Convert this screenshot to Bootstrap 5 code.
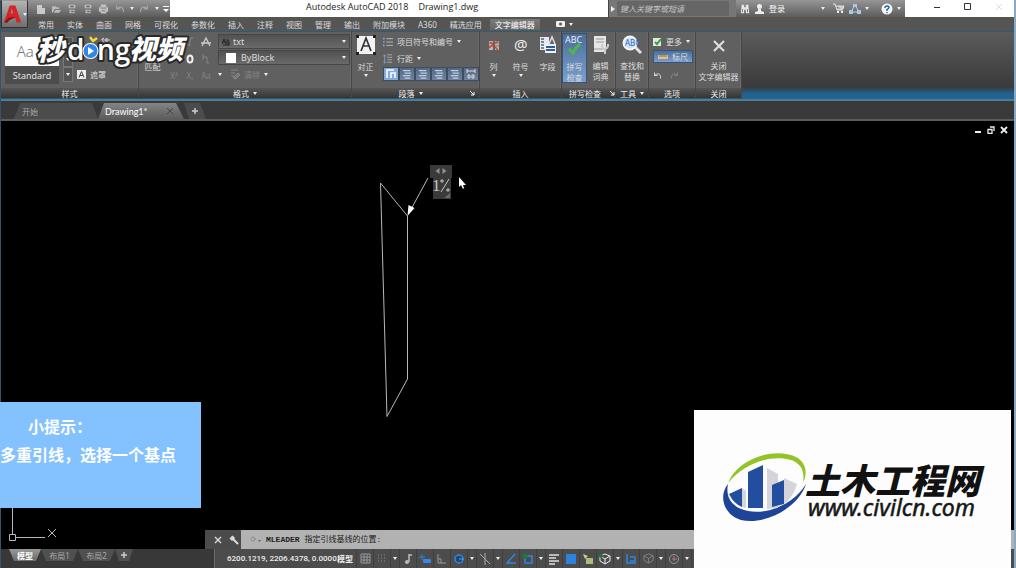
<!DOCTYPE html>
<html lang="zh-CN">
<head>
<meta charset="utf-8">
<meta name="viewport" content="width=device-width, initial-scale=1">
<title>Autodesk AutoCAD 2018 - Drawing1.dwg</title>
<link href="https://cdn.jsdelivr.net/npm/bootstrap@5.3.0/dist/css/bootstrap.min.css" rel="stylesheet">
<style>
body{font-family:"Noto Sans","Noto Sans CJK SC",sans-serif;font-size:8px;line-height:11px;color:#dcdcdc;background:#000}
button,select,input{font:inherit;color:inherit;background:none;border:0;padding:0;margin:0;border-radius:0}
button{display:flex;align-items:center;justify-content:center}
svg{display:block;flex:none}
a{color:inherit;text-decoration:none}
.cad{border-left:1px solid #35546a;border-right:2px solid #86a9c4}
.metal{background:linear-gradient(#969696,#5c5c5c)}
.title-row{height:17px;background:#fff}
.app-btn{width:27px;height:28px;background:linear-gradient(#b4b4b4,#6e6e6e);border:1px solid #333;border-top-color:#999}
.topbar{background:#555654}
.quick{width:142px;padding-left:5px}
.quick button{width:16px;height:16px}
.quick button.thin{width:9px}
.quick .dim{color:#aaa}
.doc-title{font-family:"Open Sans",sans-serif;font-size:9px;line-height:13px;color:#222;gap:10px;padding-left:136px}
.search{width:128px;background:#777;border-left:1px solid #444}
.search input{width:112px;height:15px;font-style:italic;background:#666;padding-left:3px;color:#ccc}
.search input::placeholder{color:#c4c4c4;opacity:1}
.account{width:169px}
.winbtn{width:31px;height:13px;color:#333}
.menu-tabs{height:14px;gap:13px;padding-left:10px}
.menu-tabs a.active{background:linear-gradient(#7a7a7a,#656565);margin:0 -5px;padding:0 5px;color:#fff}
.ribbon{height:70px;border-top:1px solid #2d5d76;border-bottom:2px solid #557a92;background:linear-gradient(#5b5b5b,#404040)}
.panel{background:#606060;border-right:1px solid #464646;box-shadow:inset -1px 0 #696969;padding-top:1px}
.panel-body{height:55px}
.panel-foot{height:11px;background:linear-gradient(#565656,#353535);color:#eee;border-bottom:1px solid #245975}
.w-style{width:138px}.w-format{width:213px}.w-para{width:128px}.w-insert{width:82px}.w-spell{width:54px}.w-tool{width:33px}.w-opt{width:47px}.w-close{width:46px}
.glow{background:linear-gradient(#5b5b5b,#3a3a3a 82%,#1f6594 93%,#1f6594)}
.line17{height:17px;gap:4px}
.caret{width:0;height:0;border:2px solid transparent;border-top:3px solid #eee;border-bottom:0;flex:none}
.big{flex-direction:column;justify-content:flex-start;width:27px;height:50px;padding-top:2px}
.big svg{margin-bottom:6px}
.big .caret{margin-top:2px}
.tight svg{margin-bottom:5px}
.on{background:linear-gradient(#4c6d96,#7ba0cf);border:1px solid #35557d}
.w25{width:25px}
.cell{width:16px;height:17px}
.dim{color:#858585}
.combo{width:132px;height:15px;margin:1px 0;background:linear-gradient(#515151,#6a6a6a);border:1px solid #474747;position:relative;padding:0 3px}
.combo select{appearance:none;flex:1;height:13px;padding-left:2px;font-size:9px;line-height:13px;outline:0}
.swatch{width:10px;height:10px;background:#fff;margin:0 3px}
.preview{width:54px;height:29px;background:#fff;color:#777;font-family:"Noto Sans",sans-serif;font-weight:300;font-size:15px}
.stylename{width:54px;height:18px;background:#4d4d4d;font-family:"Open Sans",sans-serif;font-size:9px;color:#eee}
.scroller{width:10px;height:47px}
.scroller button{height:15px;border:1px solid #777;background:#555}
.align{height:15px}
.align button{width:16px;height:14px;border:1px solid #3d4d60;background:linear-gradient(#566882,#6f829d)}
.align button.on{background:#86aada}
.filetabs{height:20px;background:#3a3a3a;border-bottom:2px solid #5c5c5c;padding-left:13px}
.ftab{height:16px;width:84px;background:#4c4c4c;color:#aaa;padding:0 8px;clip-path:polygon(0 100%,6px 0,78px 0,100% 100%)}
.ftab.active{background:linear-gradient(#848484,#5c5c5c);color:#fff;font-family:Lato,sans-serif;font-size:9px;padding:0 10px 0 7px;width:86px;justify-content:space-between}
.ftab.plus{width:22px;padding:0 7px;clip-path:polygon(0 0,16px 0,100% 100%,5px 100%)}
.drawing{background:#000;overflow:hidden}
.drawing>svg{position:absolute;left:0;top:0}
.docbtns{position:absolute;right:5px;top:4px;gap:3px}
.docbtns button{width:10px;height:10px}
.cmd{position:absolute;left:204px;right:0;bottom:0;height:19px;background:#b2b2b2;color:#222;font-family:"Liberation Mono","Noto Sans CJK SC",monospace}
.cmd .grip{width:36px;background:#4b4b4b;color:#eee;gap:7px;padding-left:5px}
.cmd input{color:#222;width:230px;outline:0}
.bottom{height:19px;background:#383838}
.sheets{width:213px;padding-left:8px}
.sheets button{height:12px;width:37px;background:#505050;color:#aaa;clip-path:polygon(0 0,100% 0,32px 100%,5px 100%)}
.sheets button.active{background:linear-gradient(#999,#6a6a6a);color:#fff;font-weight:700;width:32px;clip-path:polygon(0 0,100% 0,27px 100%,5px 100%)}
.sheets button.plus{width:18px;clip-path:polygon(0 0,100% 0,14px 100%,4px 100%)}
.status{background:#4c4c4c;border-left:1px solid #6a6a6a;color:#eee}
.coords{width:119px;padding-left:12px;font-family:Roboto,sans-serif;font-weight:500;white-space:nowrap}
.status button{width:17px;height:19px;border-right:1px solid #3f3f3f}
.status button.model{width:23px;font-weight:600}
.status button.drop{width:9px}
.tip{position:absolute;left:0;bottom:60px;width:201px;height:106px;background:#84c1ff;color:#fff;font-family:"Noto Sans CJK SC",sans-serif;font-size:16px;font-weight:700;line-height:28px;padding-top:10px}
.tip p{margin:0;white-space:nowrap}
.tip p:first-child{padding-left:28px}
.brand{position:absolute;right:5px;bottom:0;width:317px;height:158px;background:#fdfdfd}
.mark-video{position:absolute;left:30px;top:26px}
</style>
</head>
<body>
<svg width="0" height="0" class="position-absolute">
<symbol id="new" viewBox="0 0 12 12"><path d="M2 2h5v3h3v6H2z" fill="#c9c9c9"/></symbol>
<symbol id="open" viewBox="0 0 12 12"><path d="M1 3h4l1 1h3v2H4l-2 4H1zM5 7h6l-2 3H3z" fill="#bbb"/></symbol>
<symbol id="save" viewBox="0 0 12 12"><path d="M2 1h8v4H2zM3 7h6v4H3z" fill="#bbb"/><path d="M4 2h4v2H4zM5 8h3v2H5z" fill="#666"/></symbol>
<symbol id="print" viewBox="0 0 12 12"><path d="M3 1h6v3h2v5H9v2H3V9H1V4h2z" fill="#c2c2c2"/><path d="M3 5h6M4 8h4" stroke="#777"/></symbol>
<symbol id="undo" viewBox="0 0 12 12"><path d="M2 2v4h4M2 6q6-5 8 1v3" fill="none" stroke="currentColor" stroke-width="1.3"/></symbol>
<symbol id="redo" viewBox="0 0 12 12"><path d="M10 2v4H6M10 6Q4 1 2 7v3" fill="none" stroke="currentColor" stroke-width="1.3"/></symbol>
<symbol id="x" viewBox="0 0 12 12"><path d="M1 1l10 10M11 1L1 11" fill="none" stroke="currentColor" stroke-width="2.2"/></symbol>
<symbol id="list" viewBox="0 0 12 12"><path d="M4 2h8M4 6h8M4 10h8" stroke="#c5c5c5"/><path d="M0 2h2M0 6h2M0 10h2" stroke="#76a9df" stroke-width="2"/></symbol>
<symbol id="spacing" viewBox="0 0 12 12"><path d="M5 1h6M5 4h6M5 7h6M5 10h6" stroke="#b5b5b5"/><path d="M2 1v10M0 3l2-2 2 2M0 9l2 2 2-2" fill="none" stroke="#76a9df"/></symbol>
<symbol id="lines" viewBox="0 0 12 12"><path d="M1 2h9M3 5h8M1 8h9M3 11h7" stroke="#bacfe9" stroke-width="1.5"/></symbol>
<symbol id="cube" viewBox="0 0 12 12"><path d="M6 1l5 2v5l-5 3-5-3V3zM1 3l5 3 5-3M6 6v5" fill="none" stroke="currentColor"/></symbol>
</svg>

<div class="cad d-flex flex-column vh-100 position-relative overflow-hidden">
<header class="topbar d-flex">
  <button class="app-btn flex-shrink-0" aria-label="应用程序菜单"><svg width="20" height="22" viewBox="0 0 21 22"><path d="M1 20L7 2h6l6 18h-5l-1-5-7 2-1 3z" fill="#d72228"/><path d="M8 11l3-1-2-5z" fill="#8d8989"/><path d="M1 20l5-5 7-1-7 4-1 2z" fill="#8d1118"/></svg><i class="caret"></i></button>
  <div class="flex-fill">
    <div class="title-row d-flex">
      <div class="quick metal d-flex align-items-center text-light">
        <button aria-label="新建"><svg width="12" height="12"><use href="#new"/></svg></button><button aria-label="打开"><svg width="11" height="12"><use href="#open"/></svg></button><button aria-label="保存"><svg width="10" height="12"><use href="#save"/></svg></button><button aria-label="另存为"><svg width="10" height="12"><use href="#save"/></svg></button><button aria-label="打印"><svg width="11" height="12"><use href="#print"/></svg></button><button class="dim" aria-label="放弃"><svg width="10" height="10"><use href="#undo"/></svg></button><button class="thin" aria-label="放弃列表"><i class="caret"></i></button><button class="dim" aria-label="重做"><svg width="10" height="10"><use href="#redo"/></svg></button><button class="thin" aria-label="重做列表"><i class="caret"></i></button><button class="thin" aria-label="自定义"><svg width="8" height="8" viewBox="0 0 8 8"><path d="M1 1h6v1H1zM1 4h6L4 7z" fill="#fff"/></svg></button>
      </div>
      <div class="doc-title d-flex flex-fill text-nowrap"><span>Autodesk AutoCAD 2018</span><span>Drawing1.dwg</span></div>
      <div class="search d-flex align-items-center"><svg width="8" height="8" viewBox="0 0 8 8"><path d="M2 1l4 3-4 3z" fill="#eee"/></svg><input type="text" aria-label="搜索" placeholder="键入关键字或短语"></div>
      <div class="account metal d-flex align-items-center text-light">
        <button class="me-1 ps-1" aria-label="查找"><svg width="10" height="12" viewBox="0 0 12 12"><path d="M2 1h3v3h2V1h3l1 10H7V7H5v4H1z" fill="#e7e7e7"/><path d="M3 6v4M9 6v4" stroke="#777"/></svg></button>
        <button class="gap-1 me-auto"><svg width="11" height="12" viewBox="0 0 11 12"><circle cx="5.500" cy="3.500" r="2.500" fill="#eee"/><path d="M4 6h3v2l3 1v2H1V9l3-1z" fill="#eee"/></svg>登录</button>
        <button class="me-1" aria-label="登录菜单"><i class="caret"></i></button>
        <button class="mx-1" aria-label="商店"><svg width="12" height="11" viewBox="0 0 12 11"><path d="M0 1h2l2 6h6M3 3h8l-1 3H4" fill="#ccc" stroke="#ddd"/><path d="M4 9h2M8 9h2" stroke="#eee" stroke-width="2"/></svg></button>
        <button class="me-2 pe-1" aria-label="保持连接"><svg width="12" height="12" viewBox="0 0 12 12"><path d="M6 2l4 7H2z" fill="none" stroke="#bcd1ec"/><path d="M4 1h4v3H4zM0 7h4v4H0zM8 7h4v4H8z" fill="#aac5ea"/></svg><i class="caret ms-1"></i></button>
        <button class="me-1" aria-label="帮助"><svg width="12" height="12" viewBox="0 0 12 12"><circle cx="6" cy="6" r="5.500" fill="#f5f7fb"/><path d="M4 5q0-2 2-2t2 1.500q0 1-2 2V8M6 9v1.300" fill="none" stroke="#265fae" stroke-width="1.400"/></svg><i class="caret ms-1"></i></button>
      </div>
      <button class="winbtn ms-3" aria-label="最小化"><svg width="8" height="8"><path d="M1 4.500h6" stroke="#333"/></svg></button>
      <button class="winbtn" aria-label="最大化"><svg width="8" height="8"><path d="M.5.500h6v6h-6z" fill="none" stroke="#333"/></svg></button>
      <button class="winbtn" aria-label="关闭"><svg width="8" height="8"><path d="M1 1l6 6M7 1L1 7" stroke="#ddd"/></svg></button>
    </div>
    <nav class="menu-tabs d-flex align-items-center text-nowrap"><a href="#">常用</a><a href="#">实体</a><a href="#">曲面</a><a href="#">网格</a><a href="#">可视化</a><a href="#">参数化</a><a href="#">插入</a><a href="#">注释</a><a href="#">视图</a><a href="#">管理</a><a href="#">输出</a><a href="#">附加模块</a><a href="#">A360</a><a href="#">精选应用</a><a href="#" class="active">文字编辑器</a><button class="ms-2 gap-1" aria-label="功能区显示"><svg width="9" height="6"><rect width="9" height="6" rx="1" fill="#eee"/><circle cx="4.500" cy="3" r="1.500" fill="#555"/></svg><i class="caret"></i></button></nav>
  </div>
</header>

<main class="ribbon d-flex flex-shrink-0 text-nowrap">
  <section class="panel w-style flex-shrink-0">
    <div class="panel-body d-flex pt-1 ps-1">
      <div class="me-1"><button class="preview">Aa B</button><button class="stylename">Standard</button></div>
      <div class="scroller d-flex flex-column"><button aria-label="上"><i class="caret"></i></button><button aria-label="下"><i class="caret"></i></button><button aria-label="更多样式"><i class="caret"></i></button></div>
      <div class="d-flex flex-column justify-content-between ms-1"><button aria-label="注释性"><svg width="34" height="9" viewBox="0 0 34 9"><path d="M26 1v8M24 3l3-2M29 1v8M27 3h6M27 6h6M30 1v8" stroke="#ccc"/></svg></button><button class="gap-1 align-self-start mb-2"><svg width="9" height="9" viewBox="0 0 9 9"><path d="M0 0h9v9H0z" fill="#eee"/><path d="M2 7.500l2.500-6 2.500 6M3 5.500h3" fill="none" stroke="#444"/></svg>遮罩</button></div>
    </div>
    <div class="panel-foot text-center">样式</div>
  </section>
  <section class="panel w-format flex-shrink-0">
    <div class="panel-body d-flex">
      <button class="big"><svg width="16" height="20"></svg>匹配</button>
      <div>
        <div class="d-flex"><button class="cell" aria-label="粗体"></button><button class="cell dim" aria-label="斜体"><svg width="6" height="9"><path d="M4 1L2 8M2 1h4M0 8h4" stroke="currentColor"/></svg></button><button class="cell" aria-label="删除线"><svg width="10" height="10" viewBox="0 0 10 10"><path d="M1 9l4-8 4 8M0 6h10" fill="none" stroke="#ccc" stroke-width="1.300"/></svg></button></div>
        <div class="d-flex"><button class="cell" aria-label="下划线"></button><button class="cell" aria-label="上划线"><svg width="8" height="10" viewBox="0 0 8 10"><ellipse cx="4" cy="5" rx="2.500" ry="3.500" fill="none" stroke="#eee" stroke-width="2"/></svg></button><button class="cell dim" aria-label="堆叠"><svg width="8" height="10" viewBox="0 0 8 10"><path d="M1 0v6M1 3h4v6h2" fill="none" stroke="currentColor"/></svg></button></div>
        <div class="d-flex dim"><button class="cell">X²</button><button class="cell">X,</button><button class="cell">Aa</button></div>
      </div>
      <div class="ms-1">
        <div class="combo d-flex align-items-center"><svg width="9" height="8" viewBox="0 0 9 8"><path d="M0 6l2-5 2 5M1 4h2M5 1v5h2V3H5M1 7h7" fill="none" stroke="#222"/></svg><select aria-label="字体"><option>txt</option></select><i class="caret"></i></div>
        <div class="combo d-flex align-items-center"><span class="swatch ms-1"></span><select aria-label="颜色"><option>ByBlock</option></select><i class="caret"></i></div>
        <div class="line17 d-flex align-items-center dim"><i class="caret"></i><button class="gap-1 ms-1"><svg width="10" height="11" viewBox="0 0 10 11"><path d="M1 1h7M1 4h4M1 7h3M3 9l5-5 2 2-4 4z" stroke="currentColor" fill="#777"/></svg>清除</button><i class="caret"></i></div>
      </div>
    </div>
    <div class="panel-foot d-flex align-items-center justify-content-center gap-1">格式 <i class="caret"></i></div>
  </section>
  <section class="panel w-para flex-shrink-0">
    <div class="panel-body d-flex">
      <button class="big"><svg width="20" height="20" viewBox="0 0 20 20"><path d="M1 1h18v18H1z" fill="#f2f2f2"/><path d="M5 16l5-13 5 13M7 11h6" fill="none" stroke="#333" stroke-width="1.700"/><path d="M0 0h3v3H0zM17 0h3v3h-3zM0 17h3v3H0zM17 17h3v3h-3z" fill="#222"/></svg>对正<i class="caret"></i></button>
      <div class="ms-1">
        <button class="line17"><svg width="10" height="10"><use href="#list"/></svg>项目符号和编号<i class="caret"></i></button>
        <button class="line17"><svg width="10" height="10"><use href="#spacing"/></svg>行距<i class="caret"></i></button>
        <div class="align d-flex"><button class="on" aria-label="默认"><svg width="10" height="10" viewBox="0 0 10 10"><path d="M1 9V1h7M5 9V4h4v5" fill="none" stroke="#fff" stroke-width="1.500"/></svg></button><button aria-label="左对齐"><svg width="10" height="10"><use href="#lines"/></svg></button><button aria-label="居中"><svg width="10" height="10"><use href="#lines"/></svg></button><button aria-label="右对齐"><svg width="10" height="10"><use href="#lines"/></svg></button><button aria-label="对正"><svg width="10" height="10"><use href="#lines"/></svg></button><button aria-label="分散"><svg width="10" height="10" viewBox="0 0 10 10"><path d="M1 2h8M1 0v4M9 0v4M2 6h2v3H2zM6 6h2v3H6z" fill="none" stroke="#ddd"/></svg></button></div>
      </div>
    </div>
    <div class="panel-foot d-flex align-items-center"><span class="ms-auto me-1">段落</span><i class="caret me-auto"></i><svg class="me-1" width="6" height="6"><path d="M1 1l4 4M5 2v3H2" stroke="#fff" fill="none"/></svg></div>
  </section>
  <section class="panel w-insert flex-shrink-0">
    <div class="panel-body d-flex">
      <button class="big"><svg width="12" height="20" viewBox="0 0 12 20"><path d="M1 6h4v9H1zM7 6h4v9H7z" fill="#c0b5b0"/><path d="M1 8h4M1 11h4M7 8h4M7 11h4" stroke="#777"/><path d="M1 13l9-7M2 7l3 3M7 12l3 3" stroke="#d3432e" stroke-width="1.500"/></svg>列<i class="caret"></i></button>
      <button class="big"><svg width="24" height="20" viewBox="0 0 24 20"><text x="5" y="15" font-family="Noto Sans" font-size="15" fill="#eee">@</text></svg>符号<i class="caret"></i></button>
      <button class="big"><svg width="18" height="20" viewBox="0 0 18 20"><path d="M1 2h9v13H1z" fill="#e4eaf2"/><path d="M2 4h3M2 7h3M2 10h3M2 13h3" stroke="#567" stroke-width="1.500"/><path d="M6 9h11v9H6z" fill="#eef3fb"/><path d="M7 12h9M7 15h9" stroke="#315b9b" stroke-width="2"/><path d="M10 9l3-7 3 7" fill="none" stroke="#ddd" stroke-width="1.500"/></svg>字段</button>
    </div>
    <div class="panel-foot text-center">插入</div>
  </section>
  <section class="panel w-spell flex-shrink-0">
    <div class="panel-body d-flex">
      <button class="big on w25 tight p-0"><svg width="20" height="22" viewBox="0 0 20 22"><text x="0" y="9" font-family="Noto Sans" font-size="9" fill="#e5edff">ABC</text><path d="M4 15l4 4q3-6 7-9" fill="none" stroke="#4db848" stroke-width="3"/></svg>拼写<br>检查</button>
      <button class="big tight"><svg width="18" height="20" viewBox="0 0 18 20"><path d="M2 1h12v16H2z" fill="#e5e5e5"/><path d="M4 4h8M4 7h8M2 14h12" stroke="#999"/><path d="M10 9v2q1 3 3 3t3-3V9M13 13v6" fill="none" stroke="#ccc" stroke-width="2"/></svg>编辑<br>词典</button>
    </div>
    <div class="panel-foot d-flex align-items-center justify-content-end gap-2">拼写检查<svg width="6" height="6"><path d="M1 1l4 4M5 2v3H2" stroke="#fff" fill="none"/></svg></div>
  </section>
  <section class="panel w-tool flex-shrink-0">
    <div class="panel-body d-flex justify-content-center"><button class="big tight"><svg width="20" height="20" viewBox="0 0 20 20"><path d="M13 12l6 6" stroke="#e2e2e2" stroke-width="3"/><circle cx="8" cy="8" r="6.500" fill="#cfe2fb" stroke="#f5f5f5" stroke-width="2"/><text x="3" y="11" font-family="Noto Sans" font-size="8" fill="#2e67b5">ABC</text></svg>查找和<br>替换</button></div>
    <div class="panel-foot d-flex align-items-center justify-content-center gap-1">工具<i class="caret"></i></div>
  </section>
  <section class="panel w-opt flex-shrink-0">
    <div class="panel-body ps-1">
      <button class="line17"><svg width="9" height="9" viewBox="0 0 9 9"><path d="M0 1h8v8H0z" fill="#dcebdc"/><path d="M2 5l2 2 4-5" stroke="#419a35" stroke-width="2" fill="none"/></svg>更多<i class="caret"></i></button>
      <button class="on gap-1 px-1"><svg width="10" height="11" viewBox="0 0 10 11"><path d="M0 4h10v4H0z" fill="#e2c091"/><path d="M2 4v2M4 4v2M6 4v2M8 4v2" stroke="#8d653d"/></svg>标尺</button>
      <div class="line17 d-flex align-items-center mt-1"><button class="me-1" aria-label="放弃"><svg width="9" height="9"><use href="#undo"/></svg></button><button class="dim" aria-label="重做"><svg width="9" height="9"><use href="#redo"/></svg></button></div>
    </div>
    <div class="panel-foot text-center">选项</div>
  </section>
  <section class="panel w-close flex-shrink-0">
    <div class="panel-body d-flex justify-content-center"><button class="big tight"><svg width="18" height="20" viewBox="-3 -5 18 20"><use href="#x" width="12" height="12"/></svg>关闭<br>文字编辑器</button></div>
    <div class="panel-foot text-center">关闭</div>
  </section>
  <div class="glow flex-fill"></div>
</main>

<nav class="filetabs d-flex align-items-end flex-shrink-0"><button class="ftab justify-content-start">开始</button><button class="ftab active">Drawing1*<svg width="8" height="8"><path d="M1 1l6 6M7 1L1 7" stroke="#444"/></svg></button><button class="ftab plus" aria-label="新图形"><svg width="8" height="8"><path d="M4 1v6M1 4h6" stroke="#ccc" stroke-width="1.500"/></svg></button></nav>

<section class="drawing position-relative flex-fill">
  <svg width="600" height="428" viewBox="1 121 600 428" fill="none" stroke="#b8b8b8">
    <path d="M380.500 183L407.500 216V379L387 416.500z"/><path d="M428 178L409 213"/><path d="M407.500 216l1-11 6 3z" fill="#fff" stroke="none"/>
    <path d="M430 165h22v13h-22zM433 178h18v21h-18z" fill="#3a3a3a" stroke="none"/>
    <path d="M439.500 168v6l-4-3zM442.500 168v6l4-3z" fill="#909090" stroke="none"/><path d="M450 193v5h-6z" fill="#666" stroke="none"/>
    <text x="432" y="191" font-family="Liberation Serif" font-size="17" fill="#c4c4c4" stroke="none">1</text><path d="M449 179l-8 13M441 180h2v2h-2zM447 189h2v2h-2z" stroke="#c4c4c4"/>
    <path d="M459 177v10l2-2 2 4 1-1-1-3h3z" fill="#fff" stroke="none"/>
    <path d="M12.500 500v34M15 537.500h30M9.500 534.500h6v6h-6zM48 529l8 8M56 529l-8 8"/>
  </svg>
  <div class="docbtns d-flex"><button aria-label="最小化"><svg width="8" height="8"><path d="M1 6h6" stroke="#eee" stroke-width="2"/></svg></button><button aria-label="还原"><svg width="8" height="8"><path d="M3 1h4v4M1 3.500h4v4H1z" fill="none" stroke="#eee" stroke-width="1.300"/></svg></button><button aria-label="关闭"><svg width="8" height="8"><path d="M1 1l6 6M7 1L1 7" stroke="#eee" stroke-width="1.800"/></svg></button></div>
  <div class="cmd d-flex align-items-center">
    <div class="grip d-flex align-items-center align-self-stretch"><button class="ms-1" aria-label="关闭命令行"><svg width="8" height="8"><path d="M1 1l6 6M7 1L1 7" stroke="#ddd" stroke-width="1.300"/></svg></button><button aria-label="自定义"><svg width="10" height="10" viewBox="0 0 10 10"><path d="M2 2l7 7" stroke="#ddd" stroke-width="2"/><path d="M1 3l2 2 2-2-2-2" fill="none" stroke="#ddd" stroke-width="1.500"/></svg></button></div>
    <svg class="ms-2" width="13" height="8"><circle cx="4" cy="3" r="2" fill="none" stroke="#666" stroke-dasharray="1 1"/><path d="M9 4h3l-1.500 2z" fill="#666"/></svg>
    <label for="cmdline" class="ms-1 text-nowrap"><b>MLEADER</b> 指定引线基线的位置:</label><input id="cmdline" type="text" class="ms-1">
  </div>
</section>

<footer class="bottom d-flex flex-shrink-0">
  <div class="sheets d-flex"><button class="active">模型</button><button>布局1</button><button>布局2</button><button class="plus" aria-label="新布局"><svg width="8" height="8"><path d="M4 1v6M1 4h6" stroke="#ccc" stroke-width="1.500"/></svg></button></div>
  <div class="status d-flex align-items-center flex-fill">
    <span class="coords">6200.1219, 2206.4378, 0.0000</span><button class="model">模型</button>
    <button aria-label="栅格"><svg width="11" height="11"><path d="M1 1h9v9H1zM4 1v9M7 1v9M1 4h9M1 7h9" fill="none" stroke="#999"/></svg></button>
    <button aria-label="捕捉"><svg width="11" height="11"><path d="M1 2h9M1 5h9M1 8h9" stroke="#888" stroke-dasharray="1 2"/></svg></button><button class="drop" aria-label="捕捉设置"><i class="caret"></i></button>
    <button aria-label="推断约束"><svg width="10" height="12"><path d="M6 1v8M6 2h3" stroke="#bbb" stroke-width="1.500"/><circle cx="4" cy="9" r="2" fill="#bbb"/></svg></button>
    <button aria-label="动态输入"><svg width="12" height="12"><path d="M3 1v6M0 4h6" stroke="#2f80dd"/><rect x="4" y="6" width="8" height="4" rx="1" fill="#338be8"/></svg></button>
    <button aria-label="正交"><svg width="10" height="12"><path d="M1 1v9h8M1 6h3v4" stroke="#999" fill="none"/></svg></button>
    <button aria-label="极轴"><svg width="12" height="12"><circle cx="6" cy="6" r="4" fill="#20496f" stroke="#3286dd" stroke-width="1.500"/><path d="M6 6h5" stroke="#4b9df1"/></svg></button><button class="drop" aria-label="极轴设置"><i class="caret"></i></button>
    <button aria-label="等轴测"><svg width="12" height="12"><path d="M1 1l10 10M6 0v12" stroke="#aaa"/></svg></button><button class="drop" aria-label="等轴测设置"><i class="caret"></i></button>
    <button aria-label="追踪"><svg width="12" height="12"><path d="M10 1L2 10h9" fill="none" stroke="#2f85df" stroke-width="1.500"/></svg></button>
    <button aria-label="对象捕捉"><svg width="12" height="12"><path d="M3 3h7v7H3z" fill="none" stroke="#2f85df" stroke-width="1.500"/><circle cx="3" cy="3" r="2.500" fill="#16793d"/></svg></button><button class="drop" aria-label="对象捕捉设置"><i class="caret"></i></button>
    <button aria-label="线宽"><svg width="12" height="12"><path d="M1 2h10M1 5h7M1 8h10M1 11h6" stroke="#ddd" stroke-width="1.500"/></svg></button>
    <button aria-label="透明度"><svg width="12" height="12"><rect x="1" y="1" width="10" height="10" fill="#2d83dc"/></svg></button>
    <button aria-label="选择循环"><svg width="12" height="12"><path d="M1 1l5 2-3 3z" fill="#c0d29a"/><path d="M4 5h7v6H4z" fill="#a8bd7b"/></svg></button>
    <button aria-label="三维捕捉"><svg width="12" height="12"><use href="#cube"/><circle cx="2" cy="3" r="2" fill="#16793d"/></svg></button><button class="drop" aria-label="三维捕捉设置"><i class="caret"></i></button>
    <button aria-label="动态 UCS"><svg width="12" height="12"><path d="M2 1v9h9M5 4h5v4H5" fill="none" stroke="#2f85df" stroke-width="1.500"/></svg></button>
    <button class="dim" aria-label="选择过滤"><svg width="11" height="11"><use href="#cube"/></svg></button><button class="drop" aria-label="过滤设置"><i class="caret"></i></button>
    <button aria-label="小控件"><svg width="12" height="12"><circle cx="6" cy="6" r="4.500" fill="none" stroke="#999"/><path d="M6 3v5M4 6h5" fill="none" stroke="#b77"/></svg></button><button class="drop" aria-label="小控件设置"><i class="caret"></i></button>
  </div>
</footer>
</div>

<svg class="mark-video" width="160" height="44" viewBox="30 26 160 44" font-family="Noto Sans CJK SC" font-weight="800" fill="#fff" stroke="#292929" stroke-width="4" stroke-linejoin="round" paint-order="stroke">
  <text x="36" y="60" font-size="28" font-style="italic">秒</text><text x="67" y="60" font-size="28" font-family="Open Sans" font-weight="600">d</text><text x="97" y="60" font-size="28" font-family="Open Sans" font-weight="600">ng</text><text x="129" y="59" font-size="27" font-style="italic">视频</text>
  <circle cx="90.500" cy="51" r="7" fill="#2f86e8" stroke="#fff" stroke-width="2"/><path d="M88 47v8l6-4z" fill="#fff" stroke="none"/><path d="M90 37l3 4 4-3" fill="none" stroke="#f2d834" stroke-width="2.500"/>
</svg>
<aside class="tip"><p>小提示：</p><p>多重引线，选择一个基点</p></aside>
<aside class="brand">
  <svg width="317" height="158" viewBox="694 410 317 158">
    <path d="M728 483C738 458 775 447 796 457C806 462 808 474 803 482C805 470 800 463 791 460C770 454 744 464 728 483z" fill="#93c326"/>
    <path d="M728 484C718 496 724 515 741 520C765 526 799 507 806 484C795 503 769 515 748 511C733 508 725 498 728 484z" fill="#1f4396"/>
    <path d="M767 468l11 6v34l-11 1zM784 478l13 6q-4 14-13 20z" fill="#d4d5da"/>
    <path d="M748 472l15-7v43h-15zM772 485l12-5v24l-12 3zM729 494l13-6v19q-8-3-13-13z" fill="#234d9f"/><path d="M742 488l4 3v17l-4-1z" fill="#d4d5da"/>
    <text x="805" y="494" font-family="Noto Sans CJK SC" font-size="35" font-weight="900" font-style="italic" fill="#111">土木工程网</text>
    <text x="808" y="516" font-family="Noto Sans" font-size="23" font-weight="400" font-style="italic" fill="#171717" stroke="#171717" stroke-width=".5">www.civilcn.com</text>
  </svg>
</aside>
<script src="https://cdn.jsdelivr.net/npm/bootstrap@5.3.0/dist/js/bootstrap.bundle.min.js"></script>
</body>
</html>
